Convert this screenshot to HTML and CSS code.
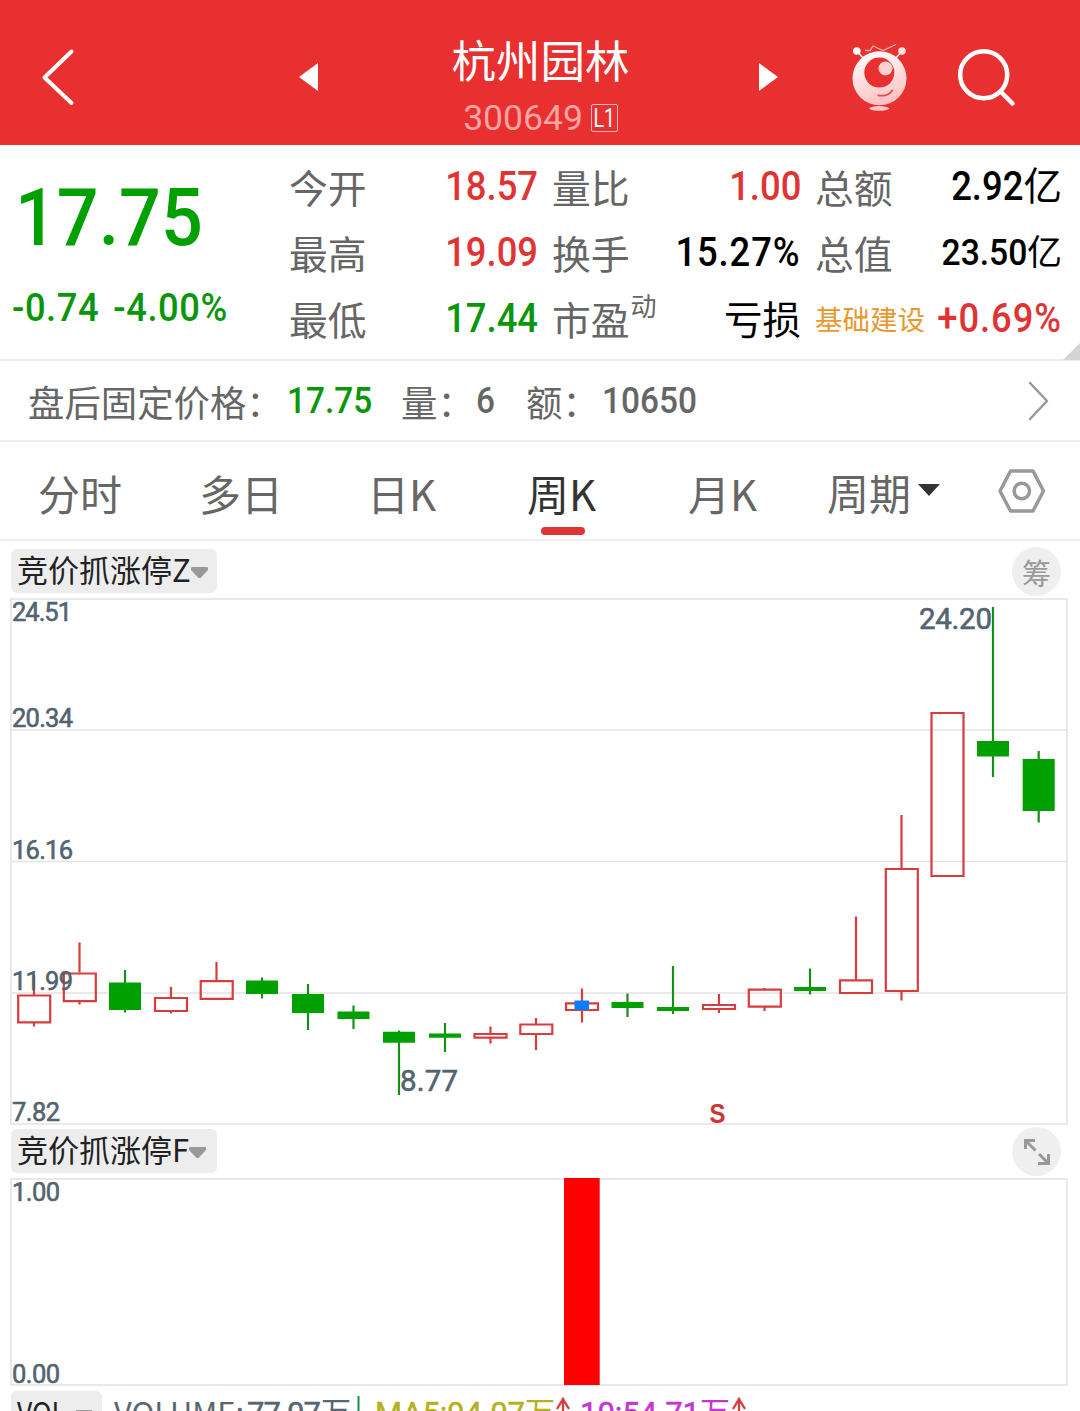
FILE: index.html
```html
<!DOCTYPE html>
<html lang="zh-CN">
<head>
<meta charset="utf-8">
<title>杭州园林 300649</title>
<link rel="stylesheet" href="styles.css">
</head>
<body>
<header class="topbar">
  <svg class="icon-back" width="34" height="60" viewBox="41 47 34 60"><path d="M71.5 51.5 44.5 77.5l27 25.500"/></svg>
  <svg class="icon-prev" width="19" height="28" viewBox="0 0 19 28"><path d="M0 14 19 0v28z"/></svg>
  <div class="stock">
    <h1>杭州园林</h1>
    <div class="code"><span>300649</span><b><i>L1</i></b></div>
  </div>
  <svg class="icon-next" width="19" height="28" viewBox="0 0 19 28"><path d="M19 14 0 0v28z"/></svg>
  <svg class="icon-robot" width="58" height="72" viewBox="851 41 58 72">
    <defs><linearGradient id="face" x1="0.2" y1="0" x2="0.5" y2="1"><stop offset="0" stop-color="#fff"/><stop offset="1" stop-color="#ffc0c0"/></linearGradient></defs>
    <path class="thin" d="M857 51l6 7M902 51l-6 7"/>
    <path class="zig" d="M865 50.500h5l3-4.500 10 4.500 13-6"/>
    <circle cx="856.800" cy="51" r="3.800" fill="#fff"/><circle cx="902" cy="51" r="3.800" fill="#ffe0e0"/>
    <circle cx="879.500" cy="78.300" r="27" fill="url(#face)"/>
    <circle cx="879.300" cy="72.600" r="15" fill="#e83030"/>
    <circle cx="885.500" cy="68.400" r="7" fill="#ffd0d0"/>
    <path class="smile" d="M878.300 95.300q10 1.800 14-5"/>
    <path d="M869 108.500q2-2.500 10-2.500t10.500 2.500q-3 2.300-10.500 2.300t-10-2.300z" fill="#ffc4c4"/>
  </svg>
  <svg class="icon-search" width="60" height="60" viewBox="956 47 60 60"><circle cx="983.700" cy="74.700" r="23.500"/><path d="m1001 92 11.500 11.500"/></svg>
</header>

<section class="quote">
  <div class="last">
    <div class="price num">17.75</div>
    <div class="change num">-0.74 -4.00%</div>
  </div>
  <dl class="stats">
    <div><dt>今开</dt><dd class="num up">18.57</dd></div>
    <div><dt>量比</dt><dd class="num up">1.00</dd></div>
    <div><dt>总额</dt><dd><span class="num">2.92</span>亿</dd></div>
    <div><dt>最高</dt><dd class="num up">19.09</dd></div>
    <div><dt>换手</dt><dd class="num wide">15.27%</dd></div>
    <div><dt>总值</dt><dd class="small"><span class="num">23.50</span>亿</dd></div>
    <div><dt>最低</dt><dd class="num down">17.44</dd></div>
    <div><dt>市盈<sup>动</sup></dt><dd>亏损</dd></div>
    <div><dt class="sector">基础建设</dt><dd class="num up wide">+0.69%</dd></div>
  </dl>
  <i class="corner"></i>
</section>

<section class="after">
  <span class="a1">盘后固定价格：</span><span class="a2 num down">17.75</span>
  <span class="a3">量：</span><span class="a4 num">6</span>
  <span class="a5">额：</span><span class="a6 num">10650</span>
  <svg width="24" height="42" viewBox="0 0 24 42"><path d="M3 3l17 18L3 39"/></svg>
</section>

<nav class="tabs">
  <a class="t1">分时</a><a class="t2">多日</a><a class="t3">日K</a><a class="t4 on">周K</a><a class="t5">月K</a>
  <a class="t6">周期<svg width="22" height="12" viewBox="0 0 22 12"><path d="M0 0h22L11 12z"/></svg></a>
  <svg class="gear" width="48" height="46" viewBox="0 0 48 46"><path d="M12.500 3h22.500L45.500 23 35 43H12.500L2 23z"/><circle cx="23.800" cy="23" r="7.700"/></svg>
</nav>

<section class="panel">
  <div class="head">
    <button>竞价抓涨停Z<svg width="17" height="12" viewBox="0 0 17 12"><path d="M0 1q0-1 1-1h15q1 0 1 1v2L9.500 11h-2L0 3z"/></svg></button>
    <span class="round">筹</span>
  </div>
  <svg class="chart" width="1080" height="528" viewBox="0 598 1080 528">
    <path class="grid" d="M11 730h1056M11 861.500h1056M11 993h1056"/>
    <rect class="frame" x="11" y="599" width="1056" height="525"/>
    <g class="fall">
      <path d="M125 970v42.500M262 977.500v21M308 984v46M353.500 1005.500v23.500M399 1030.500v64.500M445 1023v29M627.500 993.500V1017M673 966v48M810 968.500v26M993 607v170M1038.700 751v71.500"/>
      <path class="body" d="M109 982.500h32v27.500h-32zM246 980.500h32v13.500h-32zM292 994h32v19h-32zM337.500 1011.500h32v7.500h-32zM383 1031.700h32v11h-32zM429 1033.500h32v4.200h-32zM611.500 1002h32v6h-32zM657 1007h32v4h-32zM794 987h32v4h-32zM977 741h32v15.500h-32zM1022.700 759h32v52h-32z"/>
    </g>
    <g class="rise">
      <path d="M34 975v20M34 1022.500v4M79.500 942.500v30M79.500 1001.500v3M171 987v11M171 1011v2.500M216.500 962v19M490.500 1026.500v7.500M490.500 1037.500v6M536 1018v6M536 1034v16M582 988.500v14.500M582 1010v12.500M719 994v10.500M719 1009v4M764.500 988v2M764.500 1007v4M856 916.500v63.500M901.500 815v54M901.500 991v9.500"/>
      <path d="M18.200 995.500h32v26.800h-32zM63.800 973.500h32v27.700h-32zM155 998h32v13h-32zM200.700 981.200h32v17.700h-32zM474.500 1034h32v3.700h-32zM520.300 1024.500h32v9.500h-32zM566 1003.300h32v6.700h-32zM703 1005h32v4h-32zM748.800 989.700h32v17h-32zM840 980.300h32v12.700h-32zM885.800 869h32v122h-32zM931.500 713h32v163h-32z"/>
    </g>
    <rect x="574.500" y="1000.500" width="14.500" height="9.500" fill="#0a7cff"/>
    <g class="axis">
      <text x="12" y="621" textLength="60">24.51</text>
      <text x="12" y="727" textLength="61">20.34</text>
      <text x="12" y="859" textLength="61">16.16</text>
      <text x="12" y="990" textLength="61">11.99</text>
      <text x="12" y="1121" textLength="48">7.82</text>
    </g>
    <g class="mark">
      <text x="919" y="629" textLength="73">24.20</text>
      <text x="400" y="1091" textLength="58">8.77</text>
    </g>
    <text class="sell" x="709.500" y="1123" textLength="16" lengthAdjust="spacingAndGlyphs">S</text>
  </svg>
</section>

<section class="panel second">
  <div class="head">
    <button>竞价抓涨停F<svg width="17" height="12" viewBox="0 0 17 12"><path d="M0 1q0-1 1-1h15q1 0 1 1v2L9.500 11h-2L0 3z"/></svg></button>
    <span class="round"><svg width="28" height="28" viewBox="0 0 28 28"><path d="M2.500 11V2.500H12M2.500 2.500l10 10M16 16l9.500 9.500M25.500 16v9.500H15"/></svg></span>
  </div>
  <svg class="chart" width="1080" height="209" viewBox="0 1177 1080 209">
    <rect class="frame" x="11" y="1179" width="1056" height="206"/>
    <rect x="564" y="1178" width="35.700" height="207" fill="#f00"/>
    <g class="axis">
      <text x="12" y="1201" textLength="48">1.00</text>
      <text x="12" y="1383" textLength="48">0.00</text>
    </g>
  </svg>
</section>

<section class="volume">
  <svg width="1080" height="40" viewBox="0 1386 1080 40">
    <rect x="11" y="1391" width="91" height="44" rx="5" fill="#ededed"/>
    <text class="latin dark" x="17" y="1423.500" textLength="49" lengthAdjust="spacingAndGlyphs">VOL</text>
    <path d="M76 1410h16v3l-7 7h-2l-7-7z" fill="#999"/>
    <text class="latin slate" x="114" y="1423.500" textLength="130" lengthAdjust="spacingAndGlyphs">VOLUME:</text>
    <text class="vnum slate" x="247" y="1423.500" textLength="74">77.07</text>
    <text class="cjk slate" x="321" y="1423">万</text>
    <path class="down-arrow" d="M358.500 1396v27M354 1417l4.500 6 4.500-6"/>
    <text class="vnum olive" x="375" y="1423.500" textLength="150">MA5:94.07</text>
    <text class="cjk olive" x="525" y="1423">万</text>
    <path class="up-arrow" d="M563 1399v24M557 1409l6-10 6 10"/>
    <text class="vnum pink" x="580" y="1423.500" textLength="120">10:54.71</text>
    <text class="cjk pink" x="700" y="1423">万</text>
    <path class="up-arrow" d="M739 1399v24M733 1409l6-10 6 10"/>
  </svg>
</section>
</body>
</html>
```
FILE: styles.css
```css
* { box-sizing: border-box; }
body {
  margin: 0;
  width: 1080px;
  height: 1411px;
  overflow: hidden;
  background: #fff;
  color: #666;
  font-family: "Noto Sans CJK SC", sans-serif;
}
svg { display: block; flex: none; overflow: visible; }
.num { font-family: Roboto, "Noto Sans CJK SC", sans-serif; font-weight: 500; }
.up { color: #e03434; }
.down { color: #0a960a; }

.topbar {
  display: flex;
  align-items: center;
  height: 145px;
  padding-top: 9px;
  background: #e83030;
  color: #fff;
}
.topbar svg { fill: #fff; }
.topbar .icon-back { margin-left: 41px; fill: none; stroke: #fff; stroke-width: 4; stroke-linecap: round; stroke-linejoin: round; }
.icon-prev { margin-left: 224px; }
.stock { width: 441px; height: 136px; margin-top: -9px; padding-left: 4px; text-align: center; }
.stock h1 { margin: 22px 0 0; font-size: 44.500px; font-weight: 400; line-height: 64px; }
.code { display: flex; align-items: center; justify-content: center; gap: 8px; height: 55px; font-family: Roboto, sans-serif; font-size: 35.500px; color: #ffa3a3; }
.code b { display: flex; align-items: center; justify-content: center; width: 27px; height: 28px; border: 1.500px solid #ffb8b8; border-radius: 2px; font-size: 26px; font-weight: 400; color: #fff; }
.code i { font-style: normal; transform: scaleX(.75); }
.icon-robot { margin-left: 73px; }
.topbar .thin { stroke: #fff; stroke-width: 1.500; }
.topbar .zig { fill: none; stroke: #ffb0b0; stroke-width: 1.300; }
.topbar .smile { fill: none; stroke: #d65050; stroke-width: 1.700; stroke-linecap: round; }
.topbar .icon-search { margin-left: 47px; fill: none; stroke: #fff; stroke-width: 4.500; stroke-linecap: round; }

.quote { position: relative; display: flex; height: 216px; border-bottom: 2px solid #eee; }
.last { width: 289px; color: #0a960a; white-space: nowrap; }
.price { margin: 28px 0 0 15px; font-size: 80px; line-height: 90px; color: #00a000; transform: scaleX(.92); transform-origin: left; }
.change { margin: 20px 0 0 12px; font-size: 39.500px; line-height: 50px; letter-spacing: .6px; word-spacing: 5px; transform: scaleX(.92); transform-origin: left; }
.stats { display: grid; grid-template-columns: 249px 249px 247px; grid-auto-rows: 66px; column-gap: 14px; margin: 8px 0 0; }
.stats div { display: flex; justify-content: space-between; align-items: center; white-space: nowrap; }
.stats dt { font-size: 38.800px; }
.stats dd { margin: -2px 0 0; font-size: 38.500px; color: #000; }
.stats dd:has(.num) { margin-top: -6px; }
.stats dd.num { font-size: 40px; transform: scaleX(.91); transform-origin: right; margin-top: 1px; }
.stats dd.wide { letter-spacing: 1px; }
.stats dd.up { color: #e03434; }
.stats dd.down { color: #0a960a; }
.stats dd .num { display: inline-block; font-size: 40px; transform: scaleX(.91); transform-origin: right; }
.stats .small { font-size: 35px; }
.stats .small .num { font-size: 37px; }
.stats sup { font-size: 26px; line-height: 20px; vertical-align: 19px; margin-left: 1px; }
.stats .sector { font-size: 27.500px; color: #e8982e; }
.corner { position: absolute; right: 0; bottom: -1px; border-left: 17px solid transparent; border-bottom: 17px solid #d4d4d4; }

.after { display: flex; align-items: center; height: 81px; padding-left: 28px; border-bottom: 2px solid #eee; font-size: 36.400px; white-space: nowrap; }
.after .num { font-size: 37.500px; margin-top: -2px; transform: scaleX(.89); transform-origin: left; }
.a1 { width: 259px; }
.a2 { width: 114px; }
.a3 { width: 75px; }
.a4 { width: 50px; }
.a5 { width: 76px; }
.a6 { width: 425px; }
.after svg { fill: none; stroke: #999; stroke-width: 2.500; stroke-linecap: round; stroke-linejoin: round; }

.tabs { display: grid; grid-template-columns: 161px 168px 160px 161px 139px 170px 48px; align-items: center; height: 99px; padding-left: 38px; border-bottom: 2px solid #eee; font-size: 42px; }
.tabs a { position: relative; line-height: 99px; height: 97px; white-space: nowrap; padding-top: 1px; }
.tabs .on { color: #333; }
.tabs .on::after { content: ""; position: absolute; left: 14px; top: 85px; width: 44px; height: 8px; border-radius: 4px; background: #e03434; }
.tabs .t6 { display: flex; align-items: center; gap: 7px; }
.t6 svg { margin-top: -2px; fill: #333; }
.gear { fill: none; stroke: #999; stroke-width: 3.500; stroke-linejoin: round; margin-left: 1px; }

.head { display: flex; justify-content: space-between; height: 57px; padding: 8px 19px 0 11px; }
.second .head { height: 51px; padding-top: 3px; }
.head button { display: flex; align-items: center; width: 206px; height: 44px; margin: 0; padding: 0 0 4px 6px; border: 0; border-radius: 6px; background: #ededed; color: #222; font-family: inherit; font-size: 31px; line-height: 40px; white-space: nowrap; }
.head button svg { margin-top: 8px; fill: #999; }
.round { display: flex; align-items: center; justify-content: center; width: 49px; height: 49px; margin-top: -2px; border-radius: 50%; background: #efefef; color: #999; font-size: 29px; }
.round svg { fill: none; stroke: #999; stroke-width: 3; }
.chart .grid { stroke: #e4e4e4; stroke-width: 1.500; }
.chart .frame { fill: none; stroke: #e6e6e6; stroke-width: 1.700; }
.fall path { stroke: #178f17; stroke-width: 2.200; }
.fall .body { fill: #00a000; stroke: none; }
.rise path { fill: none; stroke: #d93c3c; stroke-width: 2.200; }
.axis, .mark { fill: #536471; font-family: Roboto, sans-serif; font-weight: 400; font-size: 25.500px; }
.axis text, .mark text { stroke: #536471; stroke-width: .6; }
.mark { font-size: 29.500px; }
.sell { fill: #cc3636; font: bold 27px "Liberation Sans", sans-serif; }

.volume { height: 25px; overflow: hidden; }
.latin { font-size: 30px; font-family: "Noto Sans CJK SC", sans-serif; }
.vnum { font-size: 31px; font-family: Roboto, sans-serif; font-weight: 400; stroke: currentColor; stroke-width: .5; }
.cjk { font-size: 30px; }
.dark { fill: #222; }
.slate { fill: #5b6570; color: #5b6570; }
.olive { fill: #b4b020; color: #b4b020; }
.pink { fill: #c238cf; color: #c238cf; }
.down-arrow { fill: none; stroke: #178f4a; stroke-width: 2; }
.up-arrow { fill: none; stroke: #d93c3c; stroke-width: 2.300; }
```
